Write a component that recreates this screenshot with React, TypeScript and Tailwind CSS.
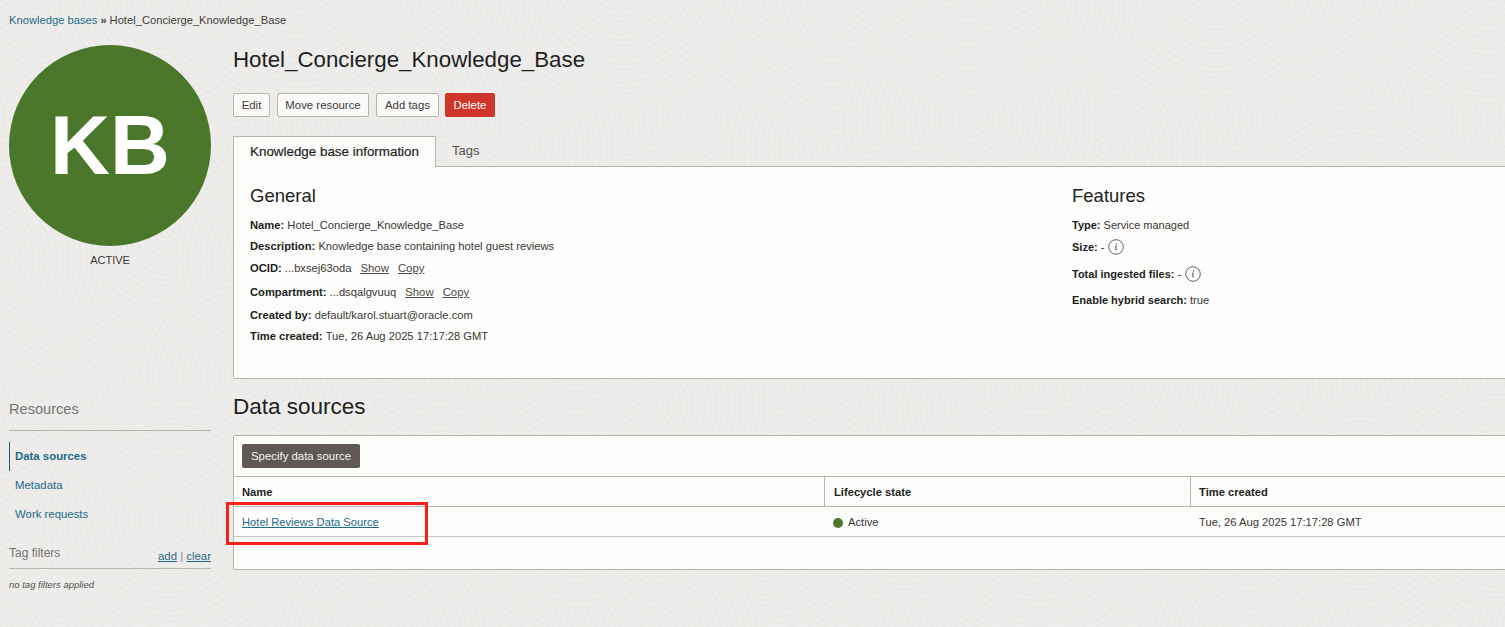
import React from "react";

const patches: [number, number, number][] = [];
for (let row = 0; row < 6; row++) {
  for (let col = 0; col < 11; col++) {
    const x = col * 150 + (row % 2 ? 75 : 0) + ((col * 37 + row * 53) % 51) - 25;
    const y = row * 130 + ((col * 29 + row * 71) % 57) - 28;
    const r = 102 + ((col * 17 + row * 31) % 36);
    patches.push([x, y, r]);
  }
}
patches.sort((a, b) => (a[0] * 7 + a[1] * 13) % 97 - (b[0] * 7 + b[1] * 13) % 97);

function Texture() {
  return (
    <svg className="absolute inset-0 pointer-events-none" width="1505" height="627" fill="none">
      {patches.map(([x, y, r], i) => (
        <g key={i}>
          <circle cx={x} cy={y} r={r} fill="#eeedeb" />
          {Array.from({ length: Math.floor(r / 6) }).map((_, j) => (
            <circle key={j} cx={x} cy={y} r={(j + 1) * 6} stroke="#eae9e6" strokeWidth="1.6" />
          ))}
        </g>
      ))}
    </svg>
  );
}

function Btn({ children, w }: { children: React.ReactNode; w: string }) {
  return (
    <button className={`h-6 ${w} rounded-[2px] border border-[#b8b3ad] bg-[#fbfaf8] pt-px text-[11.4px] text-[#3c3a38]`}>{children}</button>
  );
}

function Field({ label, className, children, small }: { label: string; className: string; children: React.ReactNode; small?: boolean }) {
  return (
    <div className={`flex items-center whitespace-pre text-[11.2px] leading-4 text-[#3a3836] ${className}`}>
      <b className={small ? "text-[11px] font-bold text-[#211f1e]" : "font-bold text-[#211f1e]"}>{label}: </b>
      {children}
    </div>
  );
}

function Action({ children }: { children: React.ReactNode }) {
  return <span className="ml-[9px] text-[11.4px] underline text-[#4a4846]">{children}</span>;
}

function Info() {
  return (
    <svg className="ml-1" width="16" height="16" viewBox="0 0 16 16" fill="none">
      <circle cx="8" cy="8" r="7.3" stroke="#55524f" strokeWidth="0.9" />
      <path d="M8.4 4.6v.7M7.2 7.2h1.1l-.6 3.4c-.1.5.3.6 1 .1" stroke="#44423f" strokeWidth="0.9" strokeLinecap="round" />
    </svg>
  );
}

export default function App() {
  return (
    <div className="relative h-[627px] w-[1505px] overflow-hidden bg-[#eeedeb] font-['Liberation_Sans',Arial,sans-serif]">
      <Texture />
      <div className="relative flex h-full">
        <aside className="ml-[9px] flex w-[202px] shrink-0 flex-col">
          <div className="mt-[12px] h-4 whitespace-nowrap text-[11.2px] leading-4 text-[#3f3d3b]">
            <span className="text-[#1e6a8a]">Knowledge bases</span>
            <span className="text-[11px] font-bold"> » </span>
            <span>Hotel_Concierge_Knowledge_Base</span>
          </div>
          <div className="mt-[17px] flex h-[201px] w-[202px] items-center justify-center rounded-[50%] bg-[#4a7729] text-[83px] font-bold leading-none text-white">
            KB
          </div>
          <div className="mt-[7px] text-center text-[11px] leading-[14px] text-[#3a3836]">ACTIVE</div>
          <div className="mt-[132px] text-[14.6px] leading-[20px] text-[#777471]">Resources</div>
          <div className="mt-[11px] border-t border-[#b8b3ad]" />
          <div className="mt-[11px] flex h-[29px] items-center border-l border-[#1e5a78] pl-[5px] text-[11.4px] font-bold text-[#1e6a8a]">Data sources</div>
          <div className="flex h-[29px] items-center pl-[6px] text-[11.4px] text-[#1e6a8a]">Metadata</div>
          <div className="flex h-[29px] items-center pl-[6px] text-[11.4px] text-[#1e6a8a]">Work requests</div>
          <div className="mt-[16px] flex items-end justify-between">
            <span className="text-[12px] leading-4 text-[#777471]">Tag filters</span>
            <span className="translate-y-[3px] text-[11.4px] leading-4 text-[#8a8784]">
              <span className="underline text-[#1e6a8a]">add</span> | <span className="underline text-[#1e6a8a]">clear</span>
            </span>
          </div>
          <div className="mt-[7px] border-t border-[#b8b3ad]" />
          <div className="mt-[10px] text-[9.5px] italic leading-3 text-[#55524f]">no tag filters applied</div>
        </aside>
        <main className="ml-[22px] w-[1290px] shrink-0">
          <h1 className="mt-[45px] h-[30px] text-[22.3px] leading-[30px] text-[#211f1e]">Hotel_Concierge_Knowledge_Base</h1>
          <div className="mt-[18px] flex gap-[7px]">
            <Btn w="w-[37px]">Edit</Btn>
            <Btn w="w-[92px]">Move resource</Btn>
            <Btn w="w-[63px]">Add tags</Btn>
            <button className="-ml-px h-6 w-[50px] rounded-[2px] bg-[#d0352b] pt-px text-[11.4px] text-white">Delete</button>
          </div>
          <div className="relative z-10 mt-[19px] flex h-[31px]">
            <div className="flex w-[203px] items-center justify-center border border-b-0 border-[#b8b3ad] bg-[#fdfdfb] text-[13.4px] text-[#211f1e] [-webkit-text-stroke:0.2px_#211f1e]">Knowledge base information</div>
            <div className="ml-[16px] flex -translate-y-[1px] items-center text-[13px] text-[#55524f]">Tags</div>
          </div>
          <section className="-mt-px flex h-[213px] rounded-bl-[2px] border border-[#b8b3ad] bg-[#fdfdfb]">
            <div className="ml-4 w-[822px]">
              <h2 className="mt-[17px] h-6 text-[18.5px] leading-6 text-[#211f1e]">General</h2>
              <Field label="Name" className="mt-[9px]">Hotel_Concierge_Knowledge_Base</Field>
              <Field label="Description" className="mt-[5px]">Knowledge base containing hotel guest reviews</Field>
              <Field label="OCID" className="mt-[6px]">...bxsej63oda<Action>Show</Action><Action>Copy</Action></Field>
              <Field label="Compartment" className="mt-2">...dsqalgvuuq<Action>Show</Action><Action>Copy</Action></Field>
              <Field label="Created by" className="mt-[7px]">default/karol.stuart@oracle.com</Field>
              <Field label="Time created" className="mt-[5px]">Tue, 26 Aug 2025 17:17:28 GMT</Field>
            </div>
            <div>
              <h2 className="mt-[17px] h-6 text-[18.5px] leading-6 text-[#211f1e]">Features</h2>
              <Field small label="Type" className="mt-[9px] text-[11px]">Service managed</Field>
              <Field small label="Size" className="mt-[6px]">-<Info /></Field>
              <Field small label="Total ingested files" className="mt-[11px]">-<Info /></Field>
              <Field small label="Enable hybrid search" className="mt-[10px]">true</Field>
            </div>
          </section>
          <h2 className="mt-[14px] h-7 text-[22.5px] leading-7 text-[#211f1e]">Data sources</h2>
          <section className="relative mt-[14px] h-[135px] rounded-l-[2px] border border-[#b8b3ad] bg-[#fdfdfb]">
            <div className="flex h-[41px] items-start border-b border-[#b8b3ad] pl-2 pt-2">
              <button className="h-6 w-[118px] rounded-[2px] bg-[#5f5854] pt-px text-[11.4px] text-[#f5f4f2]">Specify data source</button>
            </div>
            <div className="flex h-[30px] border-b border-[#b8b3ad] text-[11.2px] font-bold text-[#211f1e]">
              <div className="flex w-[590px] items-center pl-2 pt-[2px]">Name</div>
              <div className="flex w-[366px] items-center border-l border-[#b8b3ad] pl-[9px] pt-[2px]">Lifecycle state</div>
              <div className="flex flex-1 items-center border-l border-[#b8b3ad] pl-2 pt-[2px]">Time created</div>
            </div>
            <div className="flex h-[30px] border-b border-[#c9c5c0] text-[11.2px] text-[#3a3836]">
              <div className="flex w-[590px] items-center pl-2 pt-[2px] text-[#1e6a8a] underline">Hotel Reviews Data Source</div>
              <div className="flex w-[366px] items-center gap-[5px] pl-[9px] pt-[2px]">
                <span className="h-[10px] w-[10px] rounded-full bg-[#4a7729]" />
                Active
              </div>
              <div className="flex flex-1 items-center pl-[9px] pt-[2px]">Tue, 26 Aug 2025 17:17:28 GMT</div>
            </div>
            <div className="absolute left-[-8px] top-[66px] h-[43px] w-[202px] border-[3px] border-[#fb1f1a]" />
          </section>
        </main>
      </div>
    </div>
  );
}
